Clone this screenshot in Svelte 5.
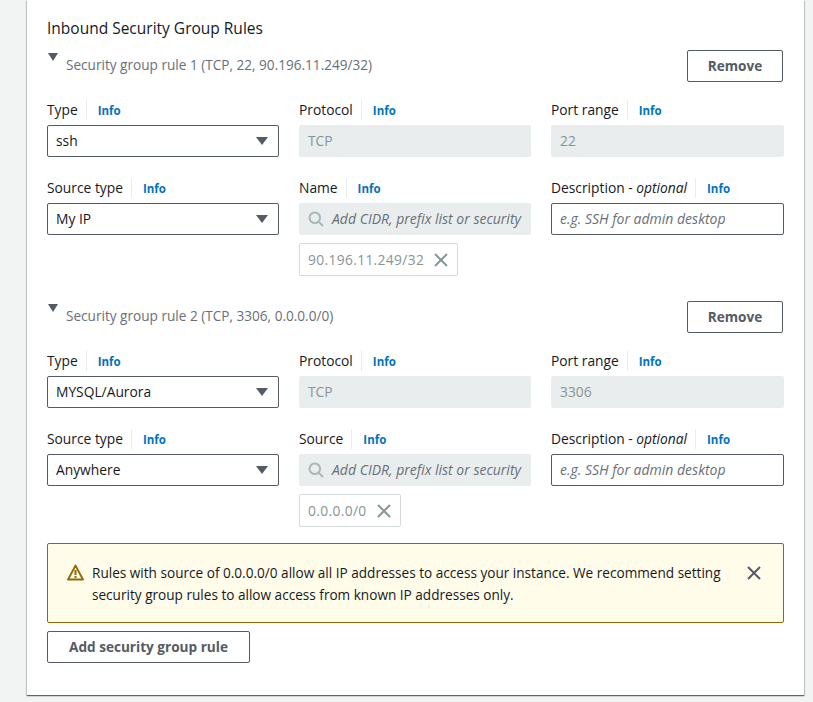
<script>
	const rules = [
		{
			title: 'Security group rule 1 (TCP, 22, 90.196.11.249/32)',
			type: 'ssh',
			port: '22',
			sourceType: 'My IP',
			sourceLabel: 'Name',
			token: '90.196.11.249/32'
		},
		{
			title: 'Security group rule 2 (TCP, 3306, 0.0.0.0/0)',
			type: 'MYSQL/Aurora',
			port: '3306',
			sourceType: 'Anywhere',
			sourceLabel: 'Source',
			token: '0.0.0.0/0'
		}
	];
</script>

{#snippet label(text, optional)}
	<div class="label">
		<span class="label-text">{text}{#if optional}{' - '}<i>optional</i>{/if}</span>
		<span class="info">Info</span>
	</div>
{/snippet}

{#snippet select(value)}
	<div class="select">
		<span>{value}</span>
		<svg width="12" height="8" viewBox="0 0 12 8"><path d="M0 0h12L6 8z" fill="#545b64" /></svg>
	</div>
{/snippet}

<div class="page">
	<section class="card">
		<h2>Inbound Security Group Rules</h2>

		{#each rules as rule}
			<div class="rule">
				<div class="rule-head">
					<svg class="caret" width="10" height="8" viewBox="0 0 10 8"><path d="M0 0h10L5 8z" fill="#545b64" /></svg>
					<span class="rule-title">{rule.title}</span>
					<button class="btn remove">Remove</button>
				</div>

				<div class="grid">
					<div>
						{@render label('Type')}
						{@render select(rule.type)}
					</div>
					<div>
						{@render label('Protocol')}
						<div class="input disabled">TCP</div>
					</div>
					<div>
						{@render label('Port range')}
						<div class="input disabled">{rule.port}</div>
					</div>
					<div>
						{@render label('Source type')}
						{@render select(rule.sourceType)}
					</div>
					<div>
						{@render label(rule.sourceLabel)}
						<div class="input disabled search">
							<svg width="16" height="16" viewBox="0 0 16 16" fill="none" stroke="#aab7b8" stroke-width="2">
								<circle cx="6.8" cy="6.8" r="5.3" />
								<path d="M10.6 10.6L15 15" />
							</svg>
							<span class="placeholder">Add CIDR, prefix list or security</span>
						</div>
						<div class="token">
							<span>{rule.token}</span>
							<svg width="14" height="14" viewBox="0 0 14 14" fill="none" stroke="#879596" stroke-width="2"><path d="M1 1l12 12M13 1L1 13" /></svg>
						</div>
					</div>
					<div>
						{@render label('Description', true)}
						<div class="input"><span class="placeholder">e.g. SSH for admin desktop</span></div>
					</div>
				</div>
			</div>
		{/each}

		<div class="alert">
			<svg class="alert-icon" width="17" height="17" viewBox="0 0 17 17">
				<path d="M8.5 1.6L1 15.6h15z" fill="none" stroke="#906806" stroke-width="2" stroke-linejoin="round" />
				<path d="M8.5 6v5M8.5 12v2" stroke="#906806" stroke-width="2" />
			</svg>
			<p>Rules with source of 0.0.0.0/0 allow all IP addresses to access your instance. We recommend setting security group rules to allow access from known IP addresses only.</p>
			<svg class="alert-close" width="14" height="14" viewBox="0 0 14 14" fill="none" stroke="#545b64" stroke-width="2"><path d="M1 1l12 12M13 1L1 13" /></svg>
		</div>

		<button class="btn add">Add security group rule</button>
	</section>
</div>

<style>
	:global(body) {
		background: #f2f3f3;
		font-family: 'Open Sans', 'Noto Sans', sans-serif;
		font-size: 13.8px;
		color: #16191f;
	}

	.page {
		height: 702px;
		overflow: hidden;
		padding-left: 27px;
		box-sizing: border-box;
	}

	.card {
		width: 777px;
		height: 695px;
		box-sizing: border-box;
		background: #fff;
		padding: 18px 20px 0;
		box-shadow: 0 1px 1px 0 rgba(0, 28, 36, 0.5), 1px 1px 1px 0 rgba(0, 28, 36, 0.15), -1px 1px 1px 0 rgba(0, 28, 36, 0.15);
	}

	h2 {
		margin: 0;
		font-size: 15.5px;
		font-weight: 400;
		line-height: 20px;
	}

	.rule-head {
		display: flex;
		align-items: flex-start;
		height: 32px;
		margin-top: 12px;
	}

	.rule + .rule .rule-head {
		margin-top: 25px;
	}

	.caret {
		margin: 3px 0 0 1px;
		flex: none;
	}

	.rule-title {
		margin: 5px 0 0 8px;
		color: #687078;
		font-size: 13.6px;
		line-height: 20px;
		flex: 1;
	}

	.btn {
		font: inherit;
		font-size: 13.6px;
		font-weight: 700;
		color: #545b64;
		background: #fff;
		border: 1px solid #545b64;
		border-radius: 2px;
		height: 32px;
		padding: 0 0 1px;
	}

	.remove {
		width: 96px;
		margin-right: 1px;
	}

	.add {
		width: 203px;
		margin-top: 8px;
	}

	.grid {
		display: grid;
		grid-template-columns: 232px 232px 233px;
		column-gap: 20px;
		row-gap: 21px;
		margin-top: 18px;
	}

	.label {
		display: flex;
		align-items: center;
		height: 20px;
		margin-bottom: 5px;
		line-height: 20px;
	}

	.label-text {
		padding-right: 8px;
		border-right: 1px solid #eaeded;
		margin-right: 11px;
	}

	.info {
		color: #0073bb;
		font-size: 11.5px;
		font-weight: 700;
		padding-top: 2px;
	}

	.select,
	.input {
		height: 32px;
		box-sizing: border-box;
		border: 1px solid #545b64;
		border-radius: 2px;
		display: flex;
		align-items: center;
		padding: 0 8px 1px;
		white-space: nowrap;
		overflow: hidden;
	}

	.select {
		justify-content: space-between;
		padding-right: 10px;
	}

	.select svg,
	.search svg {
		flex: none;
		margin-top: 1px;
	}

	.input.disabled {
		background: #eaeded;
		border-color: #eaeded;
		color: #879596;
	}

	.search {
		gap: 8px;
	}

	.placeholder {
		font-style: italic;
		font-size: 14px;
		color: #687078;
	}

	.token {
		display: inline-flex;
		align-items: center;
		gap: 10px;
		height: 33px;
		box-sizing: border-box;
		margin-top: 8px;
		padding: 0 9px 0 8px;
		border: 1px solid #d5dbdb;
		border-radius: 2px;
		color: #879596;
		letter-spacing: 0.35px;
	}

	.alert {
		display: flex;
		align-items: flex-start;
		height: 80px;
		box-sizing: border-box;
		margin-top: 16px;
		padding: 19px 22px 0 20px;
		background: #fffce9;
		border: 1px solid #906806;
		border-radius: 2px;
	}

	.alert-icon {
		flex: none;
		margin: 1px 8px 0 -1px;
	}

	.alert p {
		margin: -1px 0 0;
		font-size: 13.6px;
		line-height: 22px;
		flex: 1;
	}

	.alert-close {
		flex: none;
		margin: 3px 0 0 16px;
	}
</style>
